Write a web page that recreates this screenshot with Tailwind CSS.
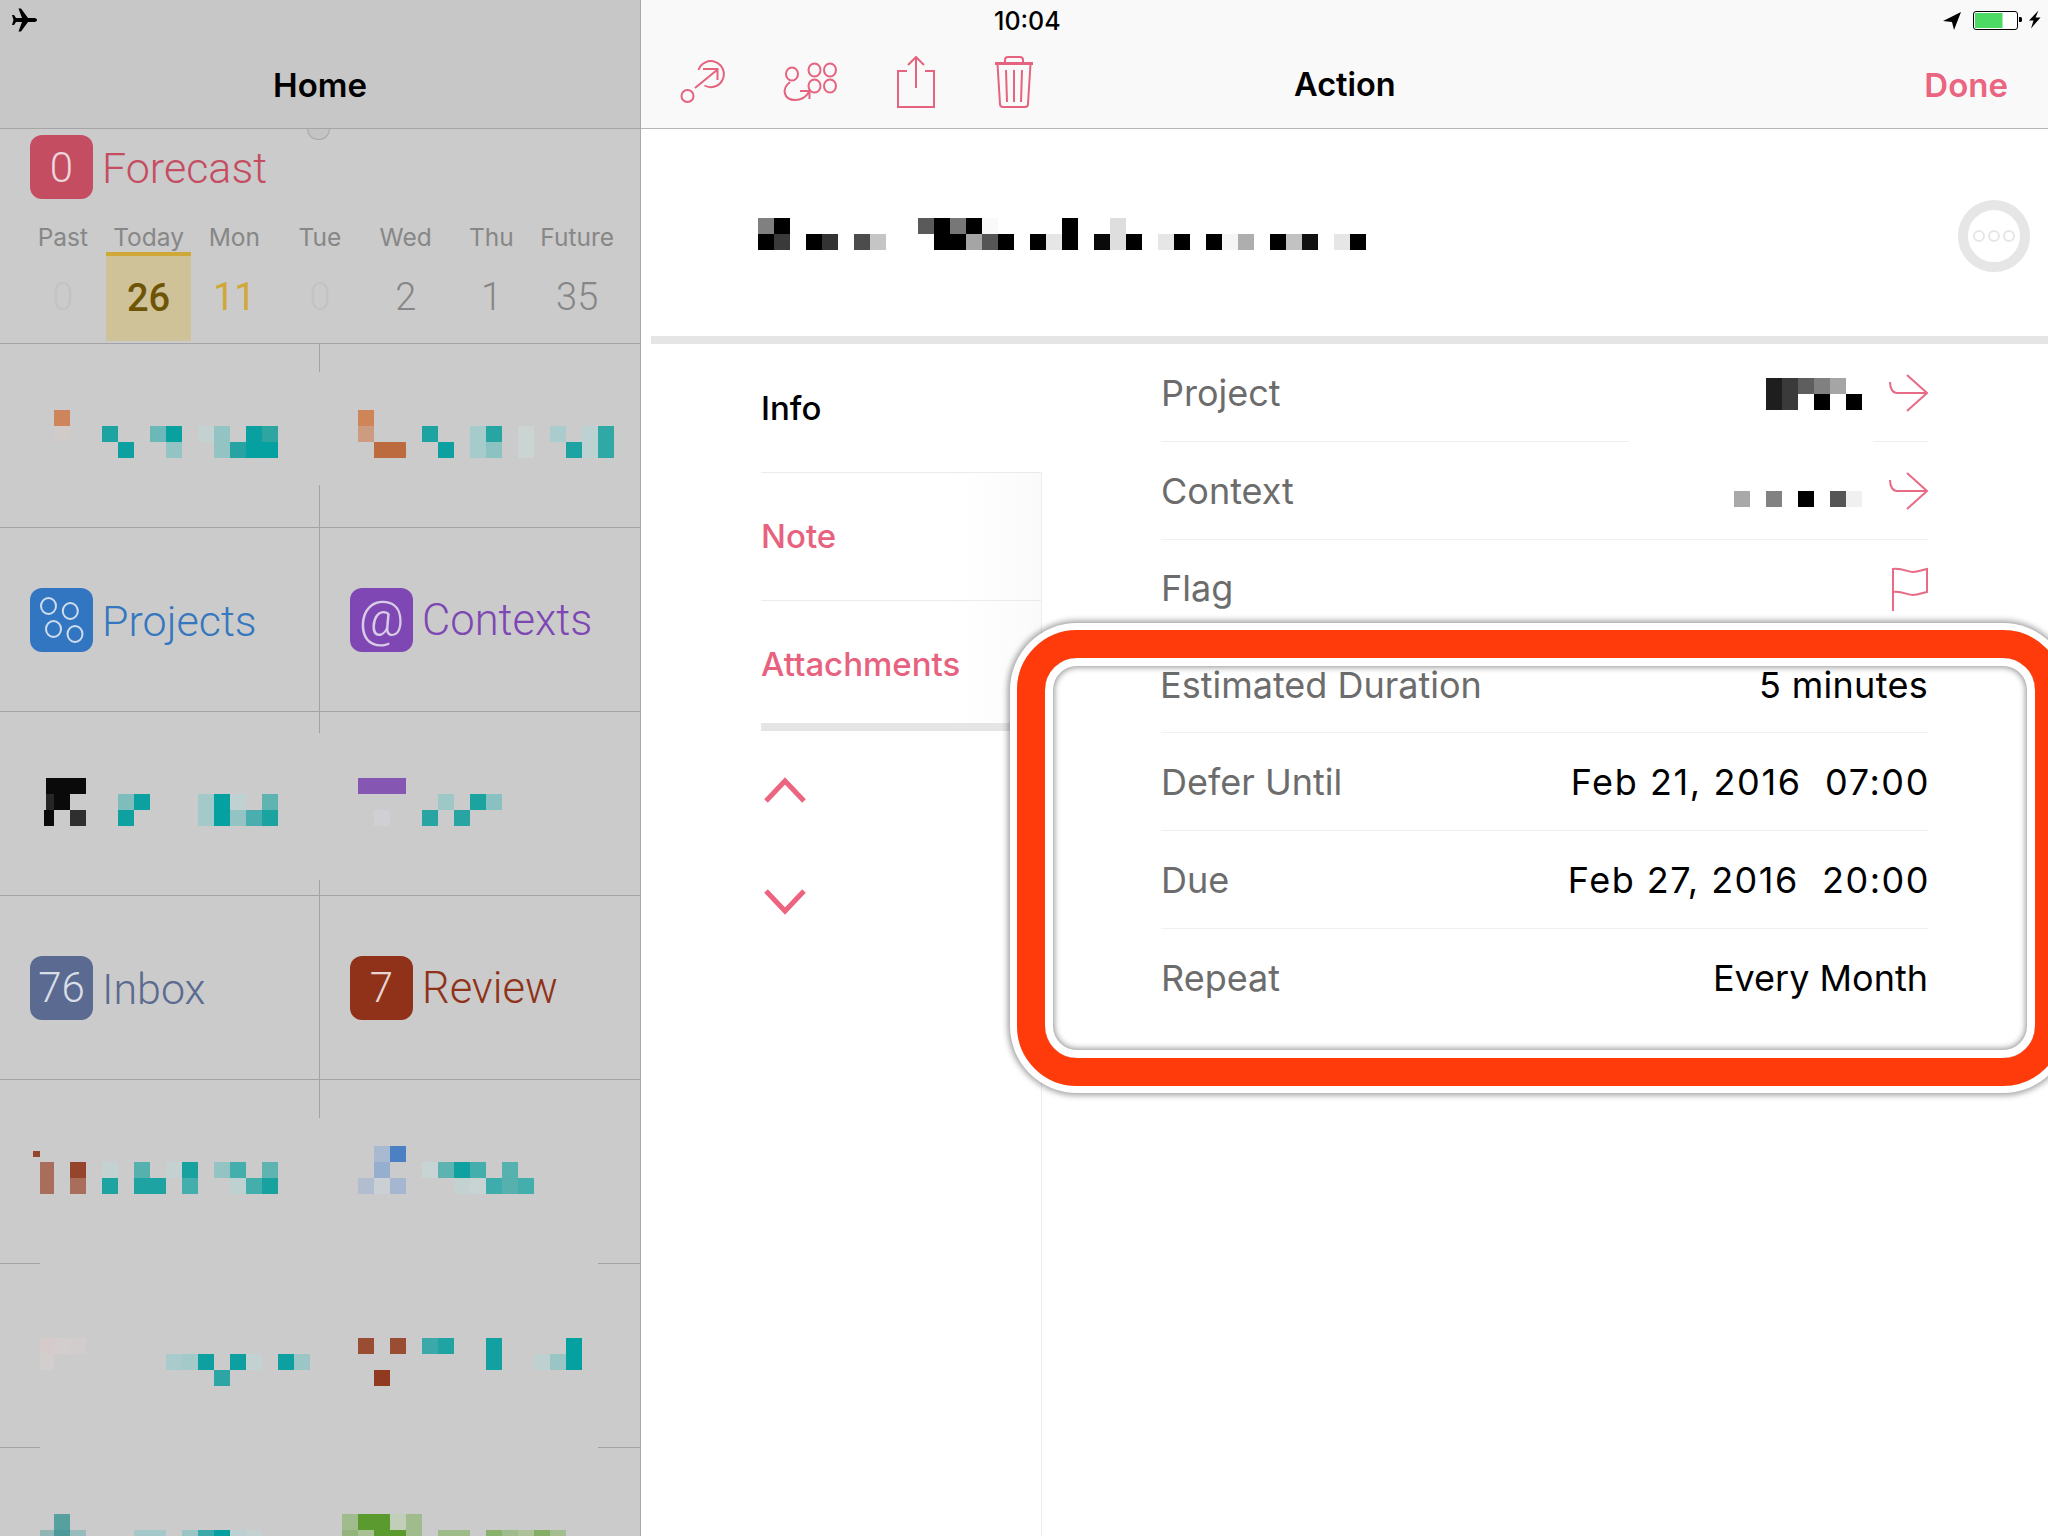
<!DOCTYPE html>
<html>
<head>
<meta charset="utf-8">
<script src="https://cdn.jsdelivr.net/npm/@tailwindcss/browser@4"></script>
</head>
<body class="m-0 bg-white">
<div class="relative w-[2048px] h-[1536px] overflow-hidden flex bg-white font-['Inter',sans-serif]">

  <!-- LEFT PANEL -->
  <aside class="relative w-[641px] h-full shrink-0 border-r border-[#a8a8a8] bg-[#cbcbcb] overflow-hidden font-['Roboto',sans-serif]">
    <div class="h-[129px] bg-[#c7c7c7] border-b border-[#a5a5a5] flex flex-col">
      <svg class="mt-[8px] ml-[12px] w-[26px] h-[24px]" viewBox="12 8 26 24"><path fill="#000" d="M37 20c0-1.5-2-2-3-2h-6L21 8.500h-2.500L22 18h-6l-2-3h-2l1.500 5-1.500 5h2l2-3h6l-3.500 9.500H21L28 22h6c1 0 3-.5 3-2z"/></svg>
      <div class="mt-[33px] text-center text-black font-['Inter',sans-serif] font-semibold text-[33px] leading-[40px]">Home</div>
    </div>
    <div class="absolute left-[307px] top-[129px] w-[23px] h-[11px] rounded-b-full bg-[#c4c4c4] border border-t-0 border-[#a8a8a8]"></div>

    <!-- forecast -->
    <section class="h-[215px] border-b border-[#a3a3a3] pt-[6px]">
      <div class="h-[64px] flex items-center pl-[30px] gap-[9px]">
        <div class="w-[63px] h-[64px] rounded-[12px] bg-[#c54d62] flex items-center justify-center text-[#ecd6da] text-[42px] font-light">0</div>
        <div class="text-[#c54d62] text-[43px] leading-[64px] font-light pt-[2px]">Forecast</div>
      </div>
      <div class="ml-[20px] mt-[23px] w-[600px] grid grid-cols-7 text-center font-['Inter',sans-serif]">
        <div><div class="h-[30px] leading-[30px] text-[24.500px] text-[#878787]">Past</div><div class="h-[89px] pt-[2px] flex items-center justify-center font-['Roboto',sans-serif] font-light text-[38px] text-[#c3c3c3]">0</div></div>
        <div><div class="h-[30px] leading-[30px] text-[24.500px] text-[#878787]">Today</div><div class="h-[89px] bg-[#cfc198] border-t-[4px] border-[#cfa838] flex items-center justify-center font-['Roboto',sans-serif] font-medium text-[38px] text-[#6e5405]">26</div></div>
        <div><div class="h-[30px] leading-[30px] text-[24.500px] text-[#878787]">Mon</div><div class="h-[89px] pt-[2px] flex items-center justify-center font-['Roboto',sans-serif] text-[38px] text-[#cfa838]">11</div></div>
        <div><div class="h-[30px] leading-[30px] text-[24.500px] text-[#878787]">Tue</div><div class="h-[89px] pt-[2px] flex items-center justify-center font-['Roboto',sans-serif] font-light text-[38px] text-[#c3c3c3]">0</div></div>
        <div><div class="h-[30px] leading-[30px] text-[24.500px] text-[#878787]">Wed</div><div class="h-[89px] pt-[2px] flex items-center justify-center font-['Roboto',sans-serif] font-light text-[38px] text-[#868686]">2</div></div>
        <div><div class="h-[30px] leading-[30px] text-[24.500px] text-[#878787]">Thu</div><div class="h-[89px] pt-[2px] flex items-center justify-center font-['Roboto',sans-serif] font-light text-[38px] text-[#868686]">1</div></div>
        <div><div class="h-[30px] leading-[30px] text-[24.500px] text-[#878787]">Future</div><div class="h-[89px] pt-[2px] flex items-center justify-center font-['Roboto',sans-serif] font-light text-[38px] text-[#868686]">35</div></div>
      </div>
    </section>

    <!-- mosaic row 1 -->
    <div class="h-[184px] border-b border-[#a3a3a3]">
      <svg class="block w-[640px] h-[183px]" viewBox="0 344 640 183" shape-rendering="crispEdges">
        <rect x="319" y="344" width="1" height="28" fill="#a3a3a3"/><rect x="319" y="485" width="1" height="42" fill="#a3a3a3"/>
        <rect x="54" y="410" width="16" height="16" fill="#cf855b"/><rect x="54" y="426" width="16" height="16" fill="#d0cbc8"/>
        <rect x="102" y="426" width="16" height="16" fill="#1ea3a3"/><rect x="118" y="442" width="16" height="16" fill="#0ea0a0"/>
        <rect x="150" y="426" width="16" height="16" fill="#6cb7b7"/><rect x="166" y="426" width="16" height="16" fill="#09a0a0"/><rect x="166" y="442" width="16" height="16" fill="#93c3c3"/>
        <rect x="198" y="426" width="16" height="16" fill="#c3d1d1"/><rect x="214" y="426" width="16" height="16" fill="#93c3c3"/><rect x="214" y="442" width="16" height="16" fill="#93c3c3"/>
        <rect x="230" y="442" width="16" height="16" fill="#28a3a3"/><rect x="246" y="426" width="16" height="16" fill="#0aa0a0"/><rect x="246" y="442" width="16" height="16" fill="#05a0a0"/>
        <rect x="262" y="426" width="16" height="16" fill="#2ea5a1"/><rect x="262" y="442" width="16" height="16" fill="#05a0a0"/>
        <rect x="358" y="410" width="16" height="16" fill="#cf8558"/><rect x="358" y="426" width="16" height="16" fill="#cd9c80"/><rect x="374" y="442" width="32" height="16" fill="#bc6b3e"/>
        <rect x="422" y="426" width="16" height="16" fill="#1ea3a3"/><rect x="438" y="442" width="16" height="16" fill="#0ea0a0"/>
        <rect x="470" y="426" width="16" height="32" fill="#a5cbcb"/><rect x="486" y="426" width="16" height="16" fill="#27a5a3"/><rect x="486" y="442" width="16" height="16" fill="#8cc2c2"/>
        <rect x="518" y="426" width="16" height="32" fill="#cbd3d3"/>
        <rect x="550" y="426" width="16" height="16" fill="#aacccc"/><rect x="566" y="442" width="16" height="16" fill="#1ea3a3"/><rect x="582" y="426" width="16" height="32" fill="#bcd1d1"/><rect x="598" y="426" width="16" height="32" fill="#30a8a6"/>
      </svg>
    </div>

    <!-- Projects / Contexts -->
    <div class="h-[184px] border-b border-[#a3a3a3] flex text-[43px] font-light">
      <div class="w-[320px] border-r border-[#a3a3a3] flex items-center pl-[30px] gap-[9px]">
        <div class="w-[63px] h-[64px] rounded-[12px] bg-[#3276c2] flex items-center justify-center">
          <svg class="w-[63px] h-[64px]" viewBox="0 0 63 64" fill="none" stroke="#cfdcec" stroke-width="2"><ellipse cx="18.500" cy="18" rx="7.500" ry="8"/><ellipse cx="40.300" cy="23" rx="7.500" ry="8"/><ellipse cx="23.500" cy="41" rx="7.500" ry="8"/><ellipse cx="45" cy="46" rx="7.500" ry="8"/></svg>
        </div>
        <div class="text-[#3477c0] leading-[64px] pt-[2px]">Projects</div>
      </div>
      <div class="flex-1 flex items-center pl-[30px] gap-[9px]">
        <div class="w-[63px] h-[64px] rounded-[12px] bg-[#7e47b3] flex items-center justify-center text-[#d8cbe6] text-[50px]">@</div>
        <div class="text-[#7e47b3] leading-[64px] pt-[2px] text-[43.500px]">Contexts</div>
      </div>
    </div>

    <!-- mosaic row 2 -->
    <div class="h-[184px] border-b border-[#a3a3a3]">
      <svg class="block w-[640px] h-[183px]" viewBox="0 712 640 183" shape-rendering="crispEdges">
        <rect x="319" y="712" width="1" height="21" fill="#a3a3a3"/><rect x="319" y="880" width="1" height="15" fill="#a3a3a3"/>
        <rect x="46" y="778" width="40" height="16" fill="#0a0a0a"/><rect x="46" y="794" width="8" height="16" fill="#262626"/><rect x="54" y="794" width="16" height="16" fill="#0a0a0a"/><rect x="44" y="810" width="10" height="16" fill="#0a0a0a"/><rect x="70" y="810" width="16" height="16" fill="#2f2f2f"/>
        <rect x="118" y="794" width="16" height="16" fill="#7fbdbd"/><rect x="118" y="810" width="16" height="16" fill="#0fa0a0"/><rect x="134" y="794" width="16" height="16" fill="#0ca0a0"/>
        <rect x="198" y="794" width="16" height="32" fill="#a4c9c9"/><rect x="214" y="794" width="16" height="32" fill="#05a0a0"/><rect x="230" y="794" width="16" height="16" fill="#c0d1d1"/><rect x="230" y="810" width="16" height="16" fill="#93c3c3"/><rect x="246" y="810" width="16" height="16" fill="#4baeae"/><rect x="262" y="794" width="16" height="16" fill="#5fb3b0"/><rect x="262" y="810" width="16" height="16" fill="#1ba3a0"/>
        <rect x="358" y="778" width="48" height="16" fill="#8557b3"/><rect x="374" y="810" width="16" height="16" fill="#d0d0d4"/>
        <rect x="422" y="810" width="16" height="16" fill="#28a5a3"/><rect x="438" y="794" width="16" height="16" fill="#9dc8c6"/><rect x="454" y="810" width="16" height="16" fill="#28a5a3"/><rect x="470" y="794" width="16" height="16" fill="#1ba3a0"/><rect x="486" y="794" width="16" height="16" fill="#88c1bf"/>
      </svg>
    </div>

    <!-- Inbox / Review -->
    <div class="h-[184px] border-b border-[#a3a3a3] flex text-[43px] font-light">
      <div class="w-[320px] border-r border-[#a3a3a3] flex items-center pl-[30px] gap-[9px]">
        <div class="w-[63px] h-[64px] rounded-[12px] bg-[#5a6a90] flex items-center justify-center text-[#d9dde6] text-[42px]">76</div>
        <div class="text-[#5a6a90] leading-[64px] pt-[2px]">Inbox</div>
      </div>
      <div class="flex-1 flex items-center pl-[30px] gap-[9px]">
        <div class="w-[63px] h-[64px] rounded-[12px] bg-[#8f3219] flex items-center justify-center text-[#e6d6d1] text-[42px]">7</div>
        <div class="text-[#8f3219] leading-[64px] pt-[2px] text-[43.500px]">Review</div>
      </div>
    </div>

    <!-- mosaic row 3 -->
    <div class="h-[184px]">
      <svg class="block w-[640px] h-[184px]" viewBox="0 1080 640 184" shape-rendering="crispEdges">
        <rect x="319" y="1080" width="1" height="38" fill="#a3a3a3"/>
        <rect x="33" y="1151" width="7" height="6" fill="#96452d"/><rect x="40" y="1162" width="14" height="32" fill="#a96e5b"/><rect x="70" y="1162" width="16" height="16" fill="#96452d"/><rect x="70" y="1178" width="16" height="16" fill="#a96e5b"/>
        <rect x="102" y="1162" width="16" height="16" fill="#c3d1d1"/><rect x="102" y="1178" width="16" height="16" fill="#1ea3a3"/>
        <rect x="134" y="1162" width="16" height="16" fill="#55b0ae"/><rect x="134" y="1178" width="32" height="16" fill="#1ea3a3"/>
        <rect x="166" y="1162" width="16" height="16" fill="#c5d1d1"/><rect x="182" y="1162" width="16" height="16" fill="#17a2a0"/><rect x="182" y="1178" width="16" height="16" fill="#44aeac"/>
        <rect x="214" y="1162" width="16" height="16" fill="#93c3c3"/><rect x="230" y="1162" width="16" height="16" fill="#44aeac"/><rect x="230" y="1178" width="16" height="16" fill="#bdd1d1"/><rect x="246" y="1178" width="16" height="16" fill="#44aeac"/><rect x="262" y="1162" width="16" height="16" fill="#5fb3b0"/><rect x="262" y="1178" width="16" height="16" fill="#17a2a0"/>
        <rect x="374" y="1146" width="16" height="16" fill="#a9b9d0"/><rect x="390" y="1146" width="16" height="16" fill="#4b80c2"/><rect x="374" y="1162" width="16" height="16" fill="#97afcf"/><rect x="358" y="1178" width="16" height="16" fill="#b2bdcf"/><rect x="374" y="1178" width="16" height="16" fill="#cbd0d4"/><rect x="390" y="1178" width="16" height="16" fill="#a4b6d0"/>
        <rect x="422" y="1162" width="16" height="16" fill="#c8d3d3"/><rect x="438" y="1162" width="16" height="16" fill="#5cb3b1"/><rect x="454" y="1162" width="16" height="16" fill="#0fa0a0"/><rect x="454" y="1178" width="16" height="16" fill="#c3d1d1"/><rect x="470" y="1162" width="16" height="16" fill="#44aeac"/><rect x="470" y="1178" width="16" height="16" fill="#c8d3d3"/><rect x="486" y="1178" width="16" height="16" fill="#3eacaa"/><rect x="502" y="1162" width="16" height="16" fill="#56b1af"/><rect x="502" y="1178" width="16" height="16" fill="#55b0ae"/><rect x="518" y="1178" width="16" height="16" fill="#44aeac"/>
        <rect x="0" y="1263" width="40" height="1" fill="#a3a3a3"/><rect x="598" y="1263" width="42" height="1" fill="#a3a3a3"/>
      </svg>
    </div>

    <!-- mosaic row 4 -->
    <div class="h-[184px]">
      <svg class="block w-[640px] h-[184px]" viewBox="0 1264 640 184" shape-rendering="crispEdges">
        <rect x="40" y="1338" width="14" height="16" fill="#d6cbcb"/><rect x="54" y="1338" width="16" height="16" fill="#d3cdcd"/><rect x="70" y="1338" width="16" height="16" fill="#d2cdcd"/><rect x="40" y="1354" width="14" height="16" fill="#d3cece"/>
        <rect x="166" y="1354" width="16" height="16" fill="#a9cbcb"/><rect x="182" y="1354" width="16" height="16" fill="#a4c9c9"/><rect x="198" y="1354" width="16" height="16" fill="#0ea0a0"/><rect x="214" y="1370" width="16" height="16" fill="#2ea5a5"/><rect x="230" y="1354" width="16" height="16" fill="#0ea0a0"/><rect x="246" y="1354" width="16" height="16" fill="#c3d1d1"/><rect x="278" y="1354" width="16" height="16" fill="#0ea0a0"/><rect x="294" y="1354" width="16" height="16" fill="#9cc6c6"/>
        <rect x="358" y="1338" width="16" height="16" fill="#9a4d33"/><rect x="390" y="1338" width="16" height="16" fill="#9a4d33"/><rect x="374" y="1370" width="16" height="16" fill="#913a22"/>
        <rect x="422" y="1338" width="16" height="16" fill="#3ba9a9"/><rect x="438" y="1338" width="16" height="16" fill="#1fa3a3"/><rect x="486" y="1338" width="16" height="32" fill="#13a0a0"/><rect x="534" y="1354" width="16" height="16" fill="#bfd0d0"/><rect x="550" y="1354" width="16" height="16" fill="#9ac5c5"/><rect x="566" y="1338" width="16" height="32" fill="#05a0a0"/>
        <rect x="0" y="1447" width="40" height="1" fill="#a3a3a3"/><rect x="598" y="1447" width="42" height="1" fill="#a3a3a3"/>
      </svg>
    </div>

    <!-- mosaic row 5 -->
    <svg class="block w-[640px] h-[88px]" viewBox="0 1448 640 88" shape-rendering="crispEdges">
      <rect x="54" y="1514" width="16" height="16" fill="#57a0a0"/><rect x="40" y="1530" width="14" height="6" fill="#8fb5b5"/><rect x="54" y="1530" width="16" height="6" fill="#4d9898"/><rect x="70" y="1530" width="16" height="6" fill="#96bcbc"/>
      <rect x="134" y="1530" width="32" height="6" fill="#a5c9c9"/><rect x="182" y="1530" width="16" height="6" fill="#99c5c5"/><rect x="198" y="1530" width="16" height="6" fill="#3ba9a9"/><rect x="214" y="1530" width="16" height="6" fill="#05a0a0"/><rect x="230" y="1530" width="16" height="6" fill="#bcd1d1"/><rect x="246" y="1530" width="16" height="6" fill="#c3d1d1"/>
      <rect x="342" y="1514" width="16" height="16" fill="#a0bb8c"/><rect x="342" y="1530" width="16" height="6" fill="#93b47c"/><rect x="358" y="1514" width="32" height="16" fill="#5b9a2e"/><rect x="358" y="1530" width="16" height="6" fill="#a8c092"/><rect x="374" y="1530" width="32" height="6" fill="#5b9a2e"/><rect x="390" y="1514" width="16" height="16" fill="#c2cfb8"/><rect x="406" y="1514" width="16" height="22" fill="#a0bb8c"/>
      <rect x="438" y="1530" width="32" height="6" fill="#9fbb89"/><rect x="486" y="1530" width="16" height="6" fill="#88b16b"/><rect x="502" y="1530" width="16" height="6" fill="#a0bb8c"/><rect x="518" y="1530" width="16" height="6" fill="#aec29a"/><rect x="534" y="1530" width="16" height="6" fill="#84ae68"/><rect x="550" y="1530" width="16" height="6" fill="#a5be90"/>
    </svg>
  </aside>

  <!-- RIGHT PANEL -->
  <main class="flex-1 flex flex-col min-w-0">
    <header class="h-[129px] bg-[#f9f9f9] border-b border-[#b5b5b5] shrink-0">
      <div class="h-[40px] flex items-center pl-[353px]">
        <span class="text-[25px] font-medium text-black leading-[40px] mt-[1px]">10:04</span>
        <svg class="ml-auto w-[100px] h-[24px] mr-[6px]" viewBox="1941 8 100 24">
          <path fill="#000" d="M1960 12l-18 9 9 1 2 8z"/>
          <rect x="1972.500" y="11.500" width="44" height="18" rx="2.500" fill="#fff" stroke="#000" stroke-width="1"/>
          <rect x="1974" y="13" width="27.500" height="15" fill="#4cd964"/>
          <path fill="#000" d="M2018 17h1.500a1.500 1.500 0 0 1 1.500 1.500v2a1.500 1.500 0 0 1-1.500 1.500H2018z"/>
          <path fill="#000" d="M2037.500 10.500l-9.500 10h4.500l-2.500 8 9.500-11h-5z"/>
        </svg>
      </div>
      <div class="h-[88px] flex items-center pl-[38px] pr-[40px]">
        <svg class="self-start mt-[16px] w-[46px] h-[52px]" viewBox="679 56 46 52" fill="none" stroke="#e5637e" stroke-width="2"><circle cx="687.500" cy="96" r="6"/><path d="M695 88l22-18M703 69h14.500v11"/><path d="M698.500 70a13 13 0 1 1 6 15.500"/></svg>
        <svg class="self-start mt-[16px] ml-[56px] w-[58px] h-[52px]" viewBox="781 56 58 52" fill="none" stroke="#e5637e" stroke-width="2"><ellipse cx="792" cy="74" rx="6" ry="6.500"/><ellipse cx="814.500" cy="70" rx="6" ry="6.500"/><ellipse cx="830" cy="70" rx="6" ry="6.500"/><ellipse cx="814.500" cy="86" rx="6" ry="6.500"/><ellipse cx="830" cy="86" rx="6" ry="6.500"/><path d="M790 82c-9 7-6 18 5 18 7 0 11-3 14-8M800 91h9.500v8"/></svg>
        <svg class="self-start mt-[16px] ml-[57px] w-[40px] h-[52px]" viewBox="896 56 40 52" fill="none" stroke="#e5637e" stroke-width="2"><path d="M907 71h-9v36h36V71h-9"/><path d="M916 88V57M908 65l8-8 8 8"/></svg>
        <svg class="self-start mt-[16px] ml-[57px] w-[42px] h-[52px]" viewBox="993 56 42 52" fill="none" stroke="#e5637e" stroke-width="2"><path d="M995 63.500h38" stroke-width="3"/><path d="M1005 63v-3a3 3 0 0 1 3-3h12a3 3 0 0 1 3 3v3"/><path d="M997.500 64l2.500 40a3 3 0 0 0 3 3h22a3 3 0 0 0 3-3l2.500-40"/><path d="M1006 70l1 32M1014 70v32M1022 70l-1 32"/></svg>
        <div class="ml-[259px] text-[32.500px] font-semibold text-black leading-[40px] mt-[1px]">Action</div>
        <div class="ml-auto text-[33px] font-semibold text-[#eb6480] leading-[40px] mt-[1px]">Done</div>
      </div>
    </header>

    <!-- title -->
    <div class="h-[207px] shrink-0 relative">
      <svg class="block absolute left-0 top-0 w-[800px] h-[207px]" viewBox="641 129 800 207" shape-rendering="crispEdges">
        <rect x="758" y="218" width="16" height="16" fill="#808080"/><rect x="774" y="218" width="16" height="16" fill="#000"/><rect x="758" y="234" width="16" height="16" fill="#000"/><rect x="774" y="234" width="16" height="16" fill="#3a3a3a"/>
        <rect x="806" y="234" width="16" height="16" fill="#000"/><rect x="822" y="234" width="16" height="16" fill="#333"/>
        <rect x="854" y="234" width="16" height="16" fill="#4c4c4c"/><rect x="870" y="234" width="16" height="16" fill="#c5c5c5"/>
        <rect x="918" y="218" width="16" height="16" fill="#5a5a5a"/><rect x="934" y="218" width="16" height="32" fill="#000"/><rect x="950" y="218" width="16" height="16" fill="#777"/><rect x="950" y="234" width="16" height="16" fill="#000"/><rect x="966" y="218" width="16" height="16" fill="#000"/><rect x="966" y="234" width="16" height="16" fill="#a5a5a5"/><rect x="982" y="218" width="16" height="16" fill="#f9f9f9"/><rect x="982" y="234" width="16" height="16" fill="#555"/><rect x="998" y="234" width="16" height="16" fill="#000"/>
        <rect x="1030" y="234" width="16" height="16" fill="#000"/><rect x="1046" y="234" width="16" height="16" fill="#e6e6e6"/><rect x="1062" y="218" width="16" height="32" fill="#000"/>
        <rect x="1094" y="234" width="16" height="16" fill="#0a0a0a"/><rect x="1110" y="218" width="16" height="32" fill="#dedede"/><rect x="1126" y="234" width="16" height="16" fill="#000"/>
        <rect x="1158" y="234" width="16" height="16" fill="#e6e6e6"/><rect x="1174" y="234" width="16" height="16" fill="#000"/>
        <rect x="1206" y="234" width="16" height="16" fill="#000"/><rect x="1222" y="234" width="16" height="16" fill="#f5f5f5"/><rect x="1238" y="234" width="16" height="16" fill="#aeaeae"/>
        <rect x="1270" y="234" width="16" height="16" fill="#000"/><rect x="1286" y="234" width="16" height="16" fill="#c2c2c2"/><rect x="1302" y="234" width="16" height="16" fill="#111"/>
        <rect x="1334" y="234" width="16" height="16" fill="#e6e6e6"/><rect x="1350" y="234" width="16" height="16" fill="#000"/>
      </svg>
      <svg class="absolute left-[1317px] top-[71px] w-[72px] h-[72px]" viewBox="0 0 72 72" fill="none"><circle cx="36" cy="36" r="31" stroke="#e6e6e6" stroke-width="10"/><circle cx="21" cy="36" r="5" stroke="#e6e6e6" stroke-width="2"/><circle cx="36" cy="36" r="5" stroke="#e6e6e6" stroke-width="2"/><circle cx="51" cy="36" r="5" stroke="#e6e6e6" stroke-width="2"/></svg>
    </div>
    <div class="h-[8px] ml-[10px] bg-[#e5e5e5] shrink-0"></div>

    <!-- body -->
    <div class="flex-1 flex min-h-0">
      <nav class="ml-[120px] w-[281px] shrink-0 flex flex-col">
        <div class="h-[128px] flex items-center text-[33px] font-medium text-black pt-[2px]">Info</div>
        <div class="flex-1 flex flex-col border-r border-[#ececec]">
          <div class="h-[128px] border-t border-[#ebebeb] flex items-center text-[33px] font-medium text-[#e7627f] bg-gradient-to-r from-white from-70% to-[#fafafa]">Note</div>
          <div class="h-[123px] border-t border-[#ebebeb] flex items-center text-[33px] font-medium text-[#e7627f] bg-gradient-to-r from-white from-70% to-[#fafafa] pt-[5px]">Attachments</div>
          <div class="h-[8px] bg-[#e5e5e5] shrink-0"></div>
          <svg class="mt-[46px] ml-[2px] w-[44px] h-[26px]" viewBox="0 0 44 26" fill="none" stroke="#ec6480" stroke-width="5"><path d="M3 24L22 4l19 20"/></svg>
          <svg class="mt-[86px] ml-[2px] w-[44px] h-[26px]" viewBox="0 0 44 26" fill="none" stroke="#ec6480" stroke-width="5"><path d="M3 2l19 20L41 2"/></svg>
        </div>
      </nav>

      <section class="ml-[119px] w-[767px] shrink-0 text-[36px] text-[#6c6c6c]">
        <div class="h-[97px] flex items-center">
          <span>Project</span>
          <svg class="ml-auto mt-[3px] w-[96px] h-[32px]" viewBox="1766 378 96 32" shape-rendering="crispEdges"><rect x="1766" y="378" width="16" height="32" fill="#1e1e1e"/><rect x="1782" y="378" width="16" height="32" fill="#3a3a3a"/><rect x="1798" y="378" width="16" height="16" fill="#5e5e5e"/><rect x="1814" y="378" width="16" height="16" fill="#808080"/><rect x="1814" y="394" width="16" height="16" fill="#000"/><rect x="1830" y="378" width="16" height="16" fill="#a5a5a5"/><rect x="1846" y="394" width="16" height="16" fill="#000"/></svg>
          <svg class="ml-[27px] w-[39px] h-[38px]" viewBox="0 0 39 38" fill="none" stroke="#e96a85" stroke-width="2"><path d="M18 1l20 18-20 18M38 19H8C4 19 1 15 1 8"/></svg>
        </div>
        <div class="flex h-px"><div class="w-[468px] bg-[#f0f0f0]"></div><div class="ml-auto w-[55px] bg-[#f0f0f0]"></div></div>
        <div class="h-[98px] flex items-center border-b border-[#f0f0f0]">
          <span>Context</span>
          <svg class="ml-auto mt-[16px] w-[128px] h-[16px]" viewBox="1734 490 128 16" shape-rendering="crispEdges"><rect x="1734" y="490" width="16" height="16" fill="#a9a9a9"/><rect x="1766" y="490" width="16" height="16" fill="#828282"/><rect x="1798" y="490" width="16" height="16" fill="#000"/><rect x="1830" y="490" width="16" height="16" fill="#555"/><rect x="1846" y="490" width="16" height="16" fill="#f0f0f0"/></svg>
          <svg class="ml-[27px] w-[39px] h-[38px]" viewBox="0 0 39 38" fill="none" stroke="#e96a85" stroke-width="2"><path d="M18 1l20 18-20 18M38 19H8C4 19 1 15 1 8"/></svg>
        </div>
        <div class="h-[98px] flex items-center">
          <span class="-mt-[2px]">Flag</span>
          <svg class="ml-auto w-[37px] h-[44px]" viewBox="0 0 37 44" fill="none" stroke="#e96a85" stroke-width="2"><path d="M2 44V2c10-1 14 3 20 3 5 0 9-2 14-3v23c-5 1-9 3-14 3-6 0-10-4-20-3"/></svg>
        </div>
        <div class="h-[95px] flex items-center justify-between border-b border-[#f0f0f0]">
          <span class="-ml-px">Estimated Duration</span><span class="text-black tracking-[0.3px]">5 minutes</span>
        </div>
        <div class="h-[98px] flex items-center justify-between border-b border-[#f0f0f0]">
          <span>Defer Until</span><span class="text-black whitespace-pre tracking-[1.6px] -mr-[2px]">Feb 21, 2016  07:00</span>
        </div>
        <div class="h-[98px] flex items-center justify-between border-b border-[#f0f0f0]">
          <span>Due</span><span class="text-black whitespace-pre tracking-[1.5px] -mr-[2px]">Feb 27, 2016  20:00</span>
        </div>
        <div class="h-[98px] flex items-center justify-between">
          <span class="-mt-[1px]">Repeat</span><span class="text-black -mt-[1px]">Every Month</span>
        </div>
      </section>
    </div>
  </main>

  <!-- highlight overlay -->
  <div class="absolute left-[1017px] top-[630px] w-[1046px] h-[456px] rounded-[60px] border-[28px] border-[#ff3b0b] shadow-[0_0_0_7px_#ffffff,0_0_6px_9px_rgba(0,0,0,0.4),inset_0_0_0_8px_#ffffff,inset_0_0_6px_9px_rgba(0,0,0,0.45)]"></div>
</div>
</body>
</html>
